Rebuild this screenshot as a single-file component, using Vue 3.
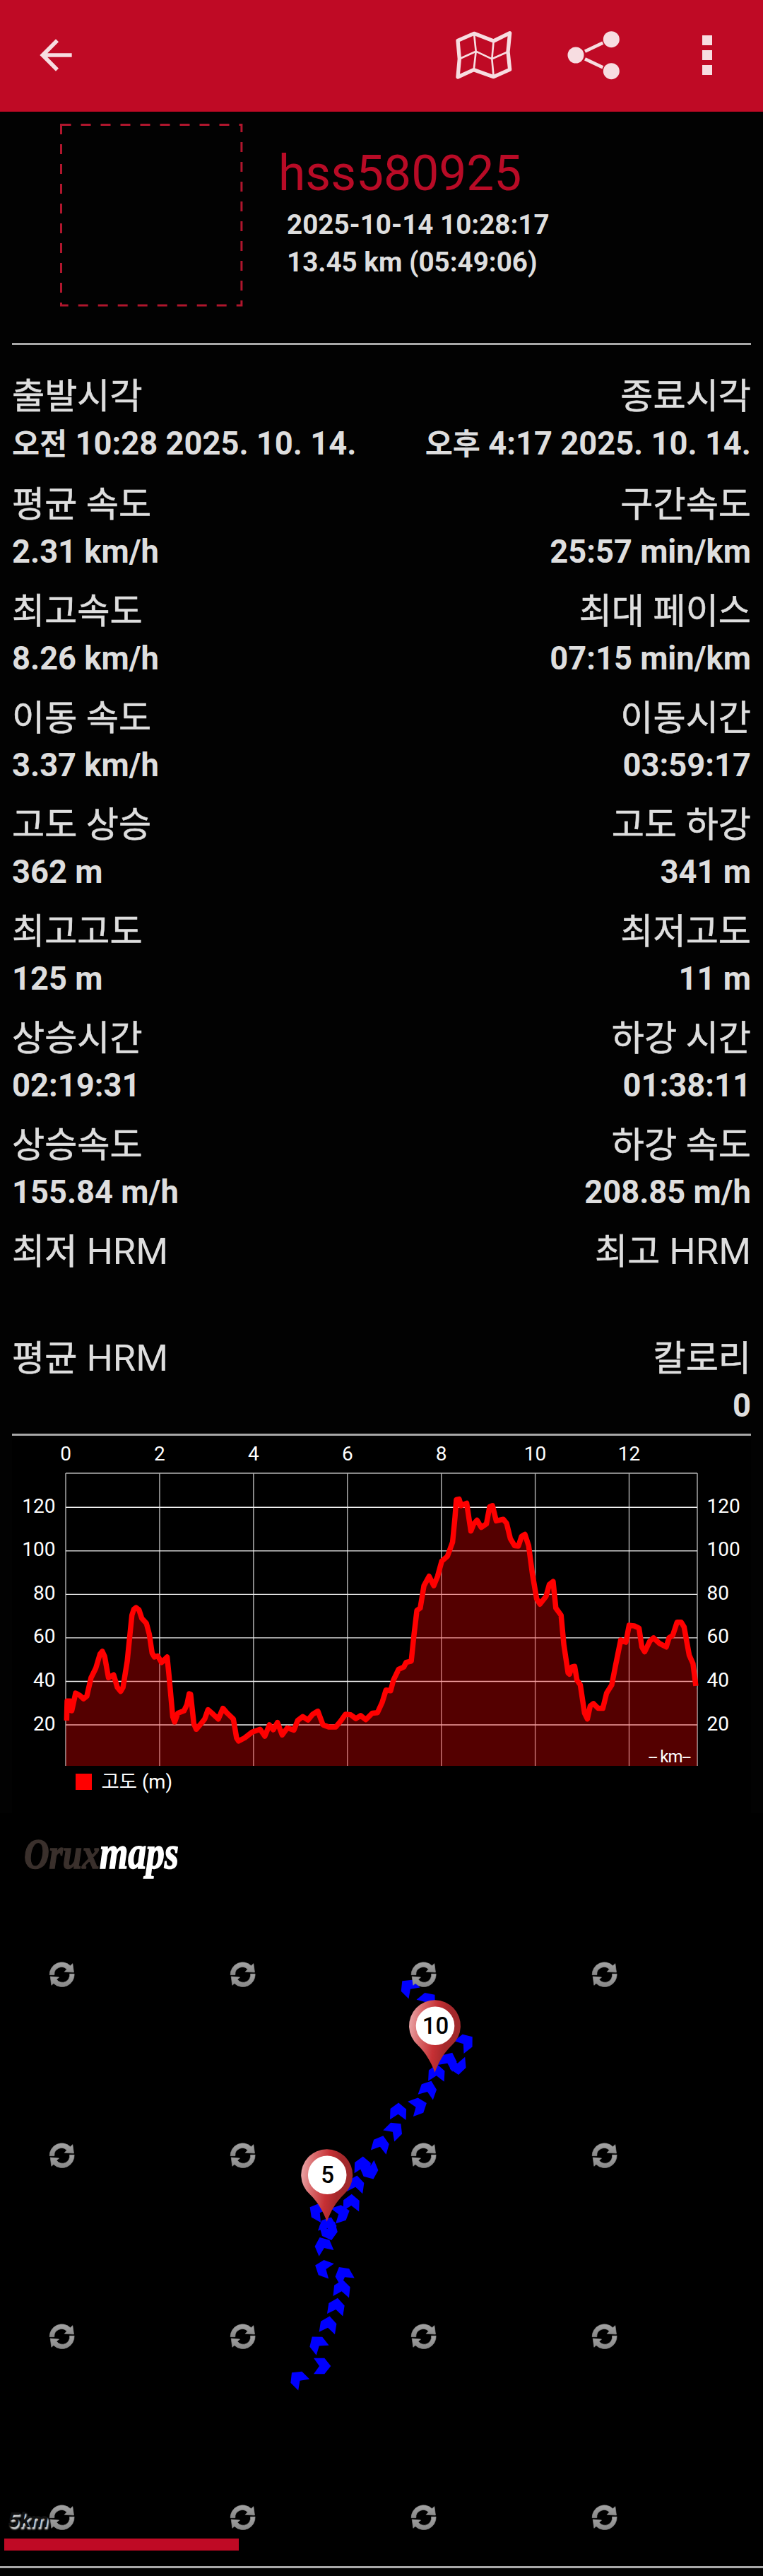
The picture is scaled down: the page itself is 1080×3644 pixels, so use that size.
<script setup>
import { computed } from "vue";

const track = {
  name: "hss580925",
  date: "2025-10-14 10:28:17",
  summary: "13.45 km (05:49:06)",
};

const stats = [
  ["출발시각", "오전 10:28 2025. 10. 14.", "종료시각", "오후 4:17 2025. 10. 14."],
  ["평균 속도", "2.31 km/h", "구간속도", "25:57 min/km"],
  ["최고속도", "8.26 km/h", "최대 페이스", "07:15 min/km"],
  ["이동 속도", "3.37 km/h", "이동시간", "03:59:17"],
  ["고도 상승", "362 m", "고도 하강", "341 m"],
  ["최고고도", "125 m", "최저고도", "11 m"],
  ["상승시간", "02:19:31", "하강 시간", "01:38:11"],
  ["상승속도", "155.84 m/h", "하강 속도", "208.85 m/h"],
  ["최저 HRM", "", "최고 HRM", ""],
  ["평균 HRM", "", "칼로리", "0"],
];

// Hangul and Latin runs get slightly different sizes
const runs = (text) =>
  (text.match(/[가-힣]+(?: [가-힣]+)*|[^가-힣]+/g) || []).map((part) => ({
    part,
    hangul: /[가-힣]/.test(part),
  }));

// [km, altitude in m]
const altitude = [
  [0.02, 22], [0.03, 31], [0.1, 31], [0.13, 26.5], [0.21, 34.6], [0.3, 33.6], [0.38, 32],
  [0.45, 33.2], [0.54, 41.7], [0.64, 46], [0.73, 52.5], [0.78, 53.8], [0.83, 51.4],
  [0.91, 41.7], [1.02, 43], [1.1, 37.3], [1.17, 35.4], [1.22, 37.3], [1.31, 49.3],
  [1.41, 70.4], [1.45, 73.1], [1.5, 73.9], [1.56, 72.9], [1.62, 69], [1.72, 66.6],
  [1.78, 61.7], [1.84, 53], [1.89, 51.2], [1.96, 51.7], [2.04, 48.7], [2.16, 51.2],
  [2.2, 42.8], [2.28, 23.8], [2.32, 21.3], [2.39, 25.4], [2.52, 26.5], [2.58, 29.2],
  [2.63, 34.3], [2.66, 34.1], [2.73, 20.5], [2.78, 18], [2.9, 21], [2.96, 22.7],
  [3.03, 27], [3.14, 24.9], [3.25, 22.7], [3.35, 27.6], [3.44, 25.4], [3.57, 22.7],
  [3.64, 14], [3.68, 12.6], [3.81, 14], [3.97, 16.7], [4.14, 18], [4.24, 14.8],
  [4.34, 20], [4.42, 17.8], [4.51, 21.1], [4.61, 15.4], [4.72, 18.6], [4.86, 17.6],
  [4.94, 22], [5.05, 23.8], [5.16, 22.2], [5.26, 24.9], [5.37, 26.3], [5.48, 20],
  [5.61, 19], [5.75, 19], [5.85, 21.6], [5.96, 24.9], [6.07, 24.6], [6.18, 22.9],
  [6.28, 24.3], [6.39, 22.4], [6.53, 25.4], [6.64, 25.6], [6.74, 30.3], [6.82, 36],
  [6.92, 35.7], [6.98, 40.6], [7.09, 45.5], [7.2, 46.6], [7.25, 48.7], [7.36, 49.3],
  [7.41, 60], [7.48, 72.6], [7.55, 73.7], [7.63, 84], [7.74, 88.3], [7.84, 84],
  [7.92, 88.3], [8.01, 95.3], [8.13, 97.5], [8.24, 104], [8.29, 115.4], [8.32, 123.5],
  [8.38, 123.8], [8.42, 120.8], [8.54, 121.9], [8.6, 113.2], [8.63, 109.1], [8.69, 112.4],
  [8.76, 114.1], [8.85, 110.8], [8.96, 112.4], [9.03, 120.3], [9.09, 120.8], [9.17, 113.8],
  [9.32, 114.5], [9.39, 112.7], [9.47, 105.6], [9.56, 102.4], [9.64, 102.2], [9.71, 106.7],
  [9.78, 107.6], [9.86, 102.4], [9.94, 89.4], [10.03, 78], [10.1, 75.5], [10.23, 79.1],
  [10.3, 84.5], [10.38, 85.9], [10.44, 73.7], [10.55, 70.4], [10.61, 56.9], [10.7, 43.9],
  [10.73, 43.3], [10.78, 46.6], [10.84, 46.9], [10.89, 40.6], [10.96, 38.4], [11.05, 25.4],
  [11.11, 22.7], [11.17, 28.7], [11.24, 29.8], [11.34, 27.6], [11.44, 27.6], [11.52, 34.6],
  [11.63, 38.4], [11.71, 47.1], [11.82, 59], [11.93, 58], [12, 65.8], [12.11, 65.5],
  [12.21, 64.5], [12.27, 55.8], [12.33, 53.6], [12.44, 58.5], [12.52, 60], [12.65, 57.4],
  [12.79, 55.8], [12.85, 60], [12.93, 61.2], [13.02, 67.2], [13.11, 67.2], [13.17, 65],
  [13.28, 52], [13.36, 48.2], [13.42, 37.9],
];

const plot = { left: 93, right: 987, top: 53, bottom: 467 };
const px = (km) => plot.left + km * 66.46;
const py = (m) => 409 - (m - 20) * 3.077;

const xTicks = [0, 2, 4, 6, 8, 10, 12];
const yTicks = [20, 40, 60, 80, 100, 120];

const linePoints = computed(() =>
  altitude.map(([km, m]) => `${px(km).toFixed(1)},${py(m).toFixed(1)}`).join(" ")
);
const areaPoints = computed(
  () => `${plot.left},${plot.bottom} ${plot.left},${py(22)} ${linePoints.value} ${plot.right},${py(36)} ${plot.right},${plot.bottom}`
);

// [x, y, heading] of every direction arrow
const arrows = [
  [421.7, 793, -45], [456, 775, 90], [449.3, 743.3, -38], [464.7, 716.7, 9], [476, 691, 9],
  [484, 665.3, 6], [486, 645.7, -30], [457.7, 636.7, -70], [457.3, 604.3, -23],
  [466, 585, 165], [464.7, 576, 20], [449.3, 556.3, -60], [483, 559, 72], [497.3, 544, 2],
  [503.7, 517.7, 8], [513.3, 490.7, 2], [523.7, 499.3, 157], [539, 461, 16],
  [558.7, 441, 45], [563.7, 414.7, 2], [592.3, 407.3, 70], [606.3, 383.3, 20],
  [618, 360.3, 3], [648, 350.7, 175], [635, 343, 25], [659, 316.7, 52], [606, 257.7, 50],
  [578, 239, -45],
];

const tileX = [87.5, 343.5, 599.5, 855.5];
const tileY = [221, 477, 733, 989];

const pins = [
  { label: "5", x: 462.7, y: 504.7 },
  { label: "10", x: 615.5, y: 293.7 },
];
</script>

<template>
  <div class="screen">
    <header class="appBar">
      <svg class="back" viewBox="0 0 24 24">
        <path d="M20 11H7.83l5.59-5.59L12 4l-8 8 8 8 1.41-1.41L7.83 13H20v-2z" />
      </svg>
      <svg class="mapIcon" viewBox="130 66 252 216">
        <path
          class="outline"
          d="M145 112L214 82L297 114L366 80L358 160L366 235L297 266L213 236L145 267L152 190Z"
        />
        <path
          class="folds"
          d="M214 82L222 158L213 236M297 114L290 190L297 266M152 190L222 158L290 190L358 160"
        />
      </svg>
      <svg class="share" viewBox="606 66 228 216">
        <circle cx="796" cy="107" r="34.5" />
        <circle cx="645" cy="174" r="34.5" />
        <circle cx="796" cy="242" r="34.5" />
        <path d="M684 158L760 122M684 190L760 226" />
      </svg>
      <svg class="more" viewBox="1182 66 42 216">
        <path d="M1182 90h42v42h-42zM1182 153h42v42h-42zM1182 216h42v42h-42z" />
      </svg>
    </header>

    <section class="trackHead">
      <svg class="photo" viewBox="0 0 260 260">
        <rect x="1.5" y="1.5" width="255.4" height="255.4" />
      </svg>
      <div class="trackInfo">
        <h1>{{ track.name }}</h1>
        <p>{{ track.date }}</p>
        <p>{{ track.summary }}</p>
      </div>
    </section>

    <section class="stats">
      <div v-for="row in stats" :key="row[0]" class="statRow">
        <div v-for="col in [0, 2]" :key="col" class="stat" :class="{ end: col === 2 }">
          <div class="label">
            <span v-for="run in runs(row[col])" :key="run.part" :class="{ hangul: run.hangul }">{{ run.part }}</span>
          </div>
          <div class="value">
            <span v-for="run in runs(row[col + 1])" :key="run.part" :class="{ hangul: run.hangul }">{{ run.part }}</span>
          </div>
        </div>
      </div>
    </section>

    <svg class="chart" viewBox="0 0 1080 534">
      <rect x="17" y="4" width="1046" height="530" fill="#000" />
      <g class="grid">
        <line v-for="x in xTicks" :key="'x' + x" :x1="px(x)" :x2="px(x)" :y1="plot.top" :y2="plot.bottom" />
        <line :x1="plot.right" :x2="plot.right" :y1="plot.top" :y2="plot.bottom" />
        <line :x1="plot.left" :x2="plot.right" :y1="plot.top" :y2="plot.top" />
      </g>
      <g class="grid bright">
        <line v-for="y in yTicks" :key="'y' + y" :x1="plot.left" :x2="plot.right" :y1="py(y)" :y2="py(y)" />
      </g>
      <polygon class="area" :points="areaPoints" />
      <polyline class="line" :points="linePoints" />
      <g class="ticks">
        <text v-for="x in xTicks" :key="'tx' + x" :x="px(x)" y="35" text-anchor="middle">{{ x }}</text>
        <template v-for="y in yTicks" :key="'ty' + y">
          <text x="78.5" :y="py(y) + 7.5" text-anchor="end">{{ y }}</text>
          <text x="1000.5" :y="py(y) + 7.5">{{ y }}</text>
        </template>
        <rect x="107" y="478" width="23" height="23" fill="#f00" />
        <text class="legend" x="143.5" y="499">고도 (m)</text>
        <text class="unit" x="978" y="461.5" text-anchor="end" textLength="60">-- km--</text>
      </g>
    </svg>

    <svg class="map" viewBox="0 -7 1080 1065">
      <defs>
        <linearGradient id="tileGrey" x1="0" y1="0" x2="0" y2="1">
          <stop offset="0" stop-color="#a4a4a4" />
          <stop offset="1" stop-color="#868686" />
        </linearGradient>
        <linearGradient id="pinRed" x1="0" y1="0.35" x2="1" y2="0.5">
          <stop offset="0" stop-color="#e9a3a5" />
          <stop offset="0.22" stop-color="#d96a6c" />
          <stop offset="0.5" stop-color="#c63034" />
          <stop offset="0.72" stop-color="#a5282b" />
          <stop offset="1" stop-color="#a02a2c" />
        </linearGradient>
      </defs>

      <text class="logo" x="34" y="71" textLength="219" lengthAdjust="spacingAndGlyphs">
        <tspan class="orux">Orux</tspan><tspan class="maps">maps</tspan>
      </text>

      <path
        v-for="([x, y, angle], i) in arrows"
        :key="'a' + i"
        class="arrow"
        d="M0-12.3L11.3-3.3V12L0 4L-11.3 12V-3.3Z"
        :transform="`translate(${x} ${y}) rotate(${angle})`"
      />

      <template v-for="y in tileY" :key="y">
        <g v-for="x in tileX" :key="x" :transform="`translate(${x} ${y}) scale(0.333)`">
          <path
            class="tile"
            d="M-52 2A52 52 0 0 1 36-37L46-46L51-9L11-11L21-22A31 31 0 0 0-32 2Z"
          />
          <path
            class="tile"
            d="M53-2A52 52 0 0 1-35 38L-44 46L-49 9L-12 12L-22 22A31 31 0 0 0 33-2Z"
          />
        </g>
      </template>

      <g v-for="pin in pins" :key="pin.label" :transform="`translate(${pin.x} ${pin.y})`">
        <path
          class="pin"
          d="M0 66C-5 52-13 38-24 27.5A36.5 36.5 0 1 1 24 27.5C13 38 6 50 0 66Z"
        />
        <circle cx="0.5" cy="0" r="27.3" fill="#fff" />
        <text class="pinText" x="1" y="11.5" text-anchor="middle">{{ pin.label }}</text>
      </g>

      <text class="scaleText" x="11" y="1003">5km</text>
      <rect x="6" y="1019" width="332" height="17" fill="#bf0a25" />
    </svg>
    <div class="bottomLine"></div>
  </div>
</template>

<style>
body {
  margin: 0;
  background: #020202;
}
</style>

<style scoped>
.screen {
  width: 1080px;
  height: 3644px;
  overflow: hidden;
  background: #020202;
  color: #dedede;
  font-family: Roboto, "Noto Sans CJK KR", sans-serif;
}

.screen svg {
  display: block;
  flex: none;
}

.appBar {
  height: 158px;
  box-sizing: border-box;
  padding: 0 72px 2px 45px;
  display: flex;
  align-items: center;
  background: #bf0a25;
  fill: #f7dde1;
}

.back {
  width: 68px;
  height: 68px;
  margin-right: auto;
}

.mapIcon {
  width: 84px;
  height: 72px;
  margin-right: 75px;
  fill: none;
  stroke: #f7dde1;
  stroke-linejoin: round;
}

.outline {
  stroke-width: 16;
}

.folds {
  stroke-width: 8;
}

.share {
  width: 76px;
  height: 72px;
  margin-right: 116px;
  stroke: #f7dde1;
  stroke-width: 14;
}

.share circle {
  stroke: none;
}

.more {
  width: 14px;
  height: 72px;
}

.trackHead {
  height: 327px;
  margin: 0 17px;
  box-sizing: border-box;
  padding: 17px 0 0 68px;
  display: flex;
}

.photo {
  width: 260px;
  height: 260px;
}

.photo rect {
  fill: none;
  stroke: #b0162d;
  stroke-width: 3;
  stroke-dasharray: 14;
}

.trackInfo {
  padding: 31px 0 0 49px;
}

.trackInfo h1 {
  margin: 0 0 5px;
  font-size: 69.5px;
  line-height: 80px;
  font-weight: 400;
  color: #b80b26;
}

.trackInfo p {
  margin: 0 0 0 12px;
  font-size: 38.6px;
  line-height: 53px;
  font-weight: 700;
}

.stats {
  height: 1501px;
  margin: 0 17px;
  padding-top: 39px;
  border: solid #a8a8a8;
  border-width: 3px 0;
  display: flex;
  flex-direction: column;
  gap: 18px;
}

.statRow {
  display: flex;
  justify-content: space-between;
}

.statRow:first-child {
  padding-bottom: 2px;
}

.stat {
  white-space: pre;
}

.end {
  text-align: right;
}

.label {
  height: 68px;
  line-height: 67px;
  font-size: 52.5px;
}

.label .hangul {
  font-size: 50.2px;
  -webkit-text-stroke: 0.6px #dedede;
}

.value {
  height: 65px;
  line-height: 65px;
  font-size: 45.3px;
  font-weight: 700;
}

.value .hangul {
  font-size: 42.5px;
}

.chart {
  width: 1080px;
  height: 534px;
}

.grid {
  stroke: #b4b4b4;
  stroke-width: 1.4;
}

.bright {
  stroke: #f0f0f0;
}

.area {
  fill: rgba(255, 0, 0, 0.33);
}

.line {
  fill: none;
  stroke: #f00;
  stroke-width: 7.5;
  stroke-linejoin: round;
}

.ticks {
  fill: #fff;
  font-size: 28px;
}

.legend {
  font-size: 27.5px;
}

.unit {
  font-size: 24px;
}

.map {
  width: 1080px;
  height: 1065px;
  background: #000;
}

.logo {
  font-family: "Liberation Serif", serif;
  font-size: 62px;
  font-weight: 700;
  font-style: italic;
  stroke-width: 1.6;
}

.orux {
  fill: #3a302c;
  stroke: #3a302c;
}

.maps {
  font-size: 65px;
  fill: #fff;
  stroke: #fff;
}

.arrow {
  fill: #00f;
}

.tile {
  fill: url(#tileGrey);
  stroke: #8c8c8c;
  stroke-width: 2;
}

.pin {
  fill: url(#pinRed);
}

.pinText {
  font-size: 33px;
  font-weight: 500;
  fill: #000;
}

.scaleText {
  font-size: 30px;
  font-weight: 700;
  font-style: italic;
  fill: #111;
  text-shadow: 2px 3px 2px #ddd;
}

.bottomLine {
  height: 3px;
  background: #a8a8a8;
}
</style>
